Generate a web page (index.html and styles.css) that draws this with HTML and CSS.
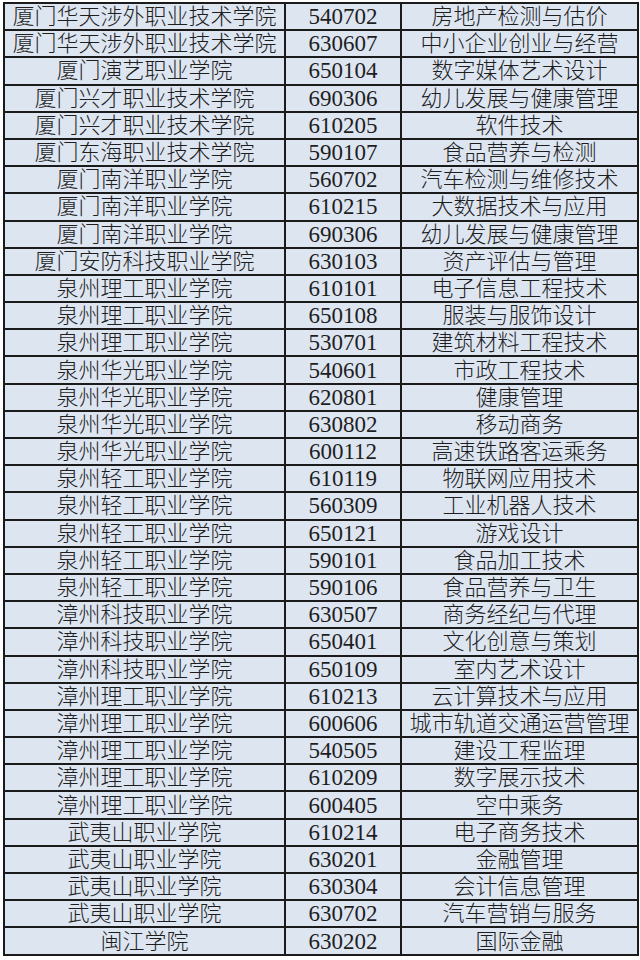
FILE: index.html
```html
<!DOCTYPE html>
<html lang="zh-CN">
<head>
<meta charset="utf-8">
<link rel="stylesheet" href="styles.css">
</head>
<body>
<table class="list">
<colgroup><col class="c1"><col class="c2"><col class="c3"></colgroup>
<tbody>
<tr><td>厦门华天涉外职业技术学院</td><td class="num">540702</td><td>房地产检测与估价</td></tr>
<tr><td>厦门华天涉外职业技术学院</td><td class="num">630607</td><td>中小企业创业与经营</td></tr>
<tr><td>厦门演艺职业学院</td><td class="num">650104</td><td>数字媒体艺术设计</td></tr>
<tr><td>厦门兴才职业技术学院</td><td class="num">690306</td><td>幼儿发展与健康管理</td></tr>
<tr><td>厦门兴才职业技术学院</td><td class="num">610205</td><td>软件技术</td></tr>
<tr><td>厦门东海职业技术学院</td><td class="num">590107</td><td>食品营养与检测</td></tr>
<tr><td>厦门南洋职业学院</td><td class="num">560702</td><td>汽车检测与维修技术</td></tr>
<tr><td>厦门南洋职业学院</td><td class="num">610215</td><td>大数据技术与应用</td></tr>
<tr><td>厦门南洋职业学院</td><td class="num">690306</td><td>幼儿发展与健康管理</td></tr>
<tr><td>厦门安防科技职业学院</td><td class="num">630103</td><td>资产评估与管理</td></tr>
<tr><td>泉州理工职业学院</td><td class="num">610101</td><td>电子信息工程技术</td></tr>
<tr><td>泉州理工职业学院</td><td class="num">650108</td><td>服装与服饰设计</td></tr>
<tr><td>泉州理工职业学院</td><td class="num">530701</td><td>建筑材料工程技术</td></tr>
<tr><td>泉州华光职业学院</td><td class="num">540601</td><td>市政工程技术</td></tr>
<tr><td>泉州华光职业学院</td><td class="num">620801</td><td>健康管理</td></tr>
<tr><td>泉州华光职业学院</td><td class="num">630802</td><td>移动商务</td></tr>
<tr><td>泉州华光职业学院</td><td class="num">600112</td><td>高速铁路客运乘务</td></tr>
<tr><td>泉州轻工职业学院</td><td class="num">610119</td><td>物联网应用技术</td></tr>
<tr><td>泉州轻工职业学院</td><td class="num">560309</td><td>工业机器人技术</td></tr>
<tr><td>泉州轻工职业学院</td><td class="num">650121</td><td>游戏设计</td></tr>
<tr><td>泉州轻工职业学院</td><td class="num">590101</td><td>食品加工技术</td></tr>
<tr><td>泉州轻工职业学院</td><td class="num">590106</td><td>食品营养与卫生</td></tr>
<tr><td>漳州科技职业学院</td><td class="num">630507</td><td>商务经纪与代理</td></tr>
<tr><td>漳州科技职业学院</td><td class="num">650401</td><td>文化创意与策划</td></tr>
<tr><td>漳州科技职业学院</td><td class="num">650109</td><td>室内艺术设计</td></tr>
<tr><td>漳州理工职业学院</td><td class="num">610213</td><td>云计算技术与应用</td></tr>
<tr><td>漳州理工职业学院</td><td class="num">600606</td><td>城市轨道交通运营管理</td></tr>
<tr><td>漳州理工职业学院</td><td class="num">540505</td><td>建设工程监理</td></tr>
<tr><td>漳州理工职业学院</td><td class="num">610209</td><td>数字展示技术</td></tr>
<tr><td>漳州理工职业学院</td><td class="num">600405</td><td>空中乘务</td></tr>
<tr><td>武夷山职业学院</td><td class="num">610214</td><td>电子商务技术</td></tr>
<tr><td>武夷山职业学院</td><td class="num">630201</td><td>金融管理</td></tr>
<tr><td>武夷山职业学院</td><td class="num">630304</td><td>会计信息管理</td></tr>
<tr><td>武夷山职业学院</td><td class="num">630702</td><td>汽车营销与服务</td></tr>
<tr><td>闽江学院</td><td class="num">630202</td><td>国际金融</td></tr>
</tbody>
</table>
</body>
</html>
```
FILE: styles.css
```css
html, body {
  margin: 0;
  padding: 0;
  background: #ffffff;
}
body {
  padding: 2px 4px 0 3px;
}
.list {
  border-collapse: collapse;
  table-layout: fixed;
  width: 634px;
  height: 954px;
  background: #dde5f1;
  color: #1e1e1e;
  font-family: "Liberation Serif", "Noto Sans CJK SC", serif;
  font-size: 22px;
  font-weight: 300;
}
.c1 { width: 281px; }
.c2 { width: 116px; }
.c3 { width: 237px; }
.list td {
  border: 2px solid #1b1b1b;
  padding: 1px 0 0 0;
  text-align: center;
  white-space: nowrap;
  overflow: hidden;
  line-height: 24px;
}
.list td.num {
  font-size: 23px;
  font-weight: 400;
}
```
